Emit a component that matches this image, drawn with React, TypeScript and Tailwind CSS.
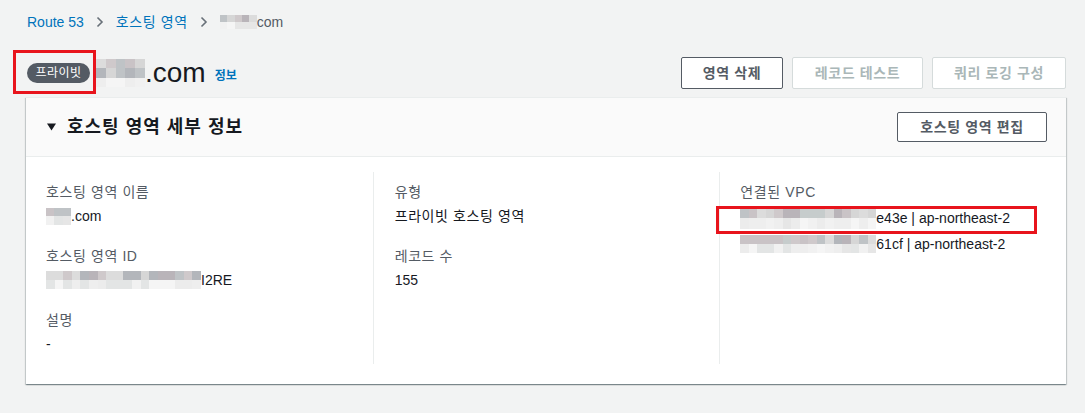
import React from "react";

const FONT = { fontFamily: '"Liberation Sans", "Noto Sans CJK KR", sans-serif' };

// blurred-out identifiers are drawn as a little pixel mosaic
function Mosaic({ w, h, seed, cell = 9 }: { w: number; h: number; seed: number; cell?: number }) {
  const cols = Math.ceil(w / cell);
  const rows = Math.max(1, Math.round(h / cell));
  let s = seed;
  const rnd = () => {
    s = (s * 9301 + 49297) % 233280;
    return s / 233280;
  };
  const dark = ["#c9c3c6", "#d6d6d6", "#bfc3c6", "#b9b4b9", "#c6cccc", "#dcdcdc", "#b3b6bb", "#cfc9cb"];
  const light = ["#ececec", "#f1f1f1", "#e6e6e6", "#eeeeee", "#e3e5e5", "#f5f5f5"];
  return (
    <span className="inline-flex flex-col align-middle" style={{ width: w, height: h }}>
      {Array.from({ length: rows }).map((_, r) => (
        <span key={r} className="flex flex-1">
          {Array.from({ length: cols }).map((_, c) => {
            const pal = r < rows - 1 || rows === 1 ? dark : light;
            return (
              <span
                key={c}
                className="h-full flex-1"
                style={{ backgroundColor: pal[Math.floor(rnd() * pal.length)] }}
              />
            );
          })}
        </span>
      ))}
    </span>
  );
}

function Chevron() {
  return (
    <svg width="8" height="12" viewBox="0 0 8 12" className="mx-[12px]">
      <path d="M1.5 1.5 L6 6 L1.5 10.5" fill="none" stroke="#687078" strokeWidth="1.6" />
    </svg>
  );
}

function Btn({ children, disabled, w }: { children: React.ReactNode; disabled?: boolean; w: string }) {
  return (
    <button
      className={
        (disabled
          ? "h-8 rounded-[2px] border border-[#d5dbdb] bg-white text-[14px] font-bold tracking-[0.6px] text-[#aab7b8] "
          : "h-8 rounded-[2px] border border-[#545b64] bg-white text-[14px] font-bold tracking-[0.6px] text-[#545b64] ") + w
      }
    >
      {children}
    </button>
  );
}

function Field({ label, children }: { label: string; children: React.ReactNode }) {
  return (
    <div className="mb-[18px] last:mb-0">
      <div className="text-[14px] leading-[22px] tracking-[0.6px] text-[#545b64]">{label}</div>
      <div className="mt-[2px] text-[14px] leading-[22px] text-[#16191f]">{children}</div>
    </div>
  );
}

export default function App() {
  return (
    <div className="min-h-screen bg-[#f2f3f3] pl-[26px] pr-[19px] pt-[12px]" style={FONT}>
      {/* breadcrumb */}
      <nav className="flex h-5 items-center pl-px text-[14px]">
        <span className="text-[#0073bb]">Route 53</span>
        <Chevron />
        <span className="tracking-[0.6px] text-[#0073bb]">호스팅 영역</span>
        <Chevron />
        <span className="flex items-center text-[#545b64]">
          <Mosaic w={37} h={14} seed={3} cell={9} />
          com
        </span>
      </nav>

      {/* page header */}
      <div className="relative mt-[25px] flex h-8 items-center justify-between">
        <div className="flex items-center">
          <span className="ml-px flex h-5 w-[63px] items-center justify-center rounded-full bg-[#545b64] text-[12px] tracking-[0.5px] text-white">
            프라이빗
          </span>
          <span className="ml-[6px] flex items-center">
            <Mosaic w={49} h={28} seed={11} cell={10} />
            <span className="text-[28px] leading-8 text-[#16191f]">.com</span>
          </span>
          <span className="ml-[9px] mt-[6px] text-[12px] font-bold text-[#0073bb]">정보</span>
        </div>
        <div className="flex gap-[9px]">
          <Btn w="w-[102px]">영역 삭제</Btn>
          <Btn w="w-[131px]" disabled>
            레코드 테스트
          </Btn>
          <Btn w="w-[134px]" disabled>
            쿼리 로깅 구성
          </Btn>
        </div>
        {/* highlight annotation */}
        <div className="pointer-events-none absolute left-[-13px] top-[-7px] h-[44px] w-[83px] border-[3px] border-[#e8141c]" />
      </div>

      {/* details card */}
      <section className="mt-[8px] border-t border-[#eaeded] bg-white shadow-[0_1px_1px_0_rgba(0,28,36,0.3),1px_1px_1px_0_rgba(0,28,36,0.15),-1px_1px_1px_0_rgba(0,28,36,0.15)]">
        <header className="flex h-[59px] items-center justify-between border-b border-[#eaeded] bg-[#fafafa] pl-[21px] pr-[19px]">
          <h2 className="flex items-center text-[18px] font-bold tracking-[1px] text-[#16191f]">
            <svg width="9" height="8" viewBox="0 0 9 8" className="mr-[11px]">
              <path d="M0 0.5 H9 L4.5 7.5 Z" fill="#16191f" />
            </svg>
            호스팅 영역 세부 정보
          </h2>
          <button className="h-[30px] w-[150px] rounded-[2px] border border-[#545b64] bg-white text-[14px] font-bold tracking-[0.6px] text-[#545b64]">
            호스팅 영역 편집
          </button>
        </header>

        <div className="grid grid-cols-3 pb-[20px] pt-[15px]">
          <div className="py-[9px] pl-[20px]">
            <Field label="호스팅 영역 이름">
              <span className="flex items-center">
                <Mosaic w={25} h={17} seed={21} cell={9} />
                .com
              </span>
            </Field>
            <Field label="호스팅 영역 ID">
              <span className="flex items-center">
                <Mosaic w={155} h={18} seed={37} cell={9} />
                I2RE
              </span>
            </Field>
            <Field label="설명">-</Field>
          </div>
          <div className="border-l border-[#eaeded] py-[9px] pl-[21px]">
            <Field label="유형">
              <span className="tracking-[0.6px]">프라이빗 호스팅 영역</span>
            </Field>
            <Field label="레코드 수">155</Field>
          </div>
          <div className="relative border-l border-[#eaeded] py-[9px] pl-[20px]">
            <div className="text-[14px] leading-[22px] tracking-[0.6px] text-[#545b64]">연결된 VPC</div>
            <div className="mt-[2px] flex h-[26px] items-center text-[14px] text-[#16191f]">
              <Mosaic w={136} h={21} seed={53} cell={9} />
              e43e | ap-northeast-2
            </div>
            <div className="flex h-[26px] items-center text-[14px] text-[#16191f]">
              <Mosaic w={136} h={18} seed={71} cell={9} />
              61cf | ap-northeast-2
            </div>
            <div className="pointer-events-none absolute left-[-4px] top-[34px] h-[28px] w-[321px] border-[3px] border-[#e8141c]" />
          </div>
        </div>
      </section>
    </div>
  );
}
